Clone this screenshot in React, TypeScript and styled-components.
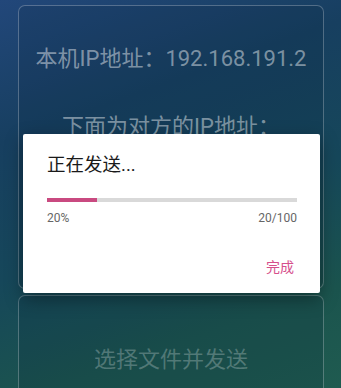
import React from "react";
import styled, { createGlobalStyle } from "styled-components";

const Global = createGlobalStyle`
  html, body { margin: 0; padding: 0; }
  body { font-family: Roboto, "Noto Sans CJK SC", sans-serif; }
`;

const Screen = styled.div`
  position: relative;
  width: 341px;
  height: 388px;
  overflow: hidden;
  box-sizing: border-box;
  padding: 5px 17px 0 18px;
  display: flex;
  flex-direction: column;
  gap: 6px;
  background: linear-gradient(160deg, #22477a 0%, #173f60 28%, #16475a 55%, #1b544e 80%, #1f5b50 100%);
`;

const Card = styled.div<{ $h: number; $pt: number }>`
  flex: 0 0 auto;
  height: ${(p) => p.$h}px;
  box-sizing: border-box;
  border: 1px solid rgba(255, 255, 255, 0.26);
  border-radius: 7px;
  background: rgba(10, 30, 50, 0.14);
  padding-top: ${(p) => p.$pt}px;
  display: flex;
  flex-direction: column;
  align-items: center;
`;

const Line = styled.div<{ $dim?: boolean; $mt?: number }>`
  font-size: 22px;
  line-height: 30px;
  white-space: nowrap;
  margin-top: ${(p) => p.$mt ?? 0}px;
  color: ${(p) => (p.$dim ? "rgba(255,255,255,0.25)" : "rgba(255,255,255,0.45)")};
`;

const Dialog = styled.div`
  position: absolute;
  left: 23px;
  top: 134px;
  width: 297px;
  height: 159px;
  box-sizing: border-box;
  background: #ffffff;
  border-radius: 2px;
  box-shadow: 0 6px 18px rgba(0, 0, 0, 0.35);
  padding: 19px 18px 0 24px;
  display: flex;
  flex-direction: column;
`;

const Title = styled.div`
  font-size: 18.5px;
  line-height: 24px;
  color: #1a1a1a;
`;

const Track = styled.div`
  margin-top: 21px;
  margin-right: 5px;
  height: 4px;
  background: #d9d9d9;
  display: flex;
`;

const Fill = styled.div`
  height: 100%;
  background: #c94a80;
`;

const Labels = styled.div`
  margin-top: 8px;
  margin-right: 5px;
  display: flex;
  justify-content: space-between;
  font-size: 12px;
  line-height: 16px;
  color: #666;
`;

const Actions = styled.div`
  margin-top: 27px;
  display: flex;
  justify-content: flex-end;
`;

const Button = styled.button`
  border: none;
  background: transparent;
  padding: 4px 8px;
  font-family: inherit;
  font-size: 14px;
  line-height: 20px;
  color: #d64f8c;
`;

export default function App() {
  const done = 20;
  const total = 100;
  const pct = (done / total) * 100;
  return (
    <>
      <Global />
      <Screen>
        <Card $h={284} $pt={38}>
          <Line>本机IP地址：192.168.191.2</Line>
          <Line $mt={38}>下面为对方的IP地址：</Line>
        </Card>
        <Card $h={120} $pt={49}>
          <Line $dim>选择文件并发送</Line>
        </Card>
        <Dialog>
          <Title>正在发送...</Title>
          <Track>
            <Fill style={{ width: `${pct}%` }} />
          </Track>
          <Labels>
            <span>{pct}%</span>
            <span>
              {done}/{total}
            </span>
          </Labels>
          <Actions>
            <Button>完成</Button>
          </Actions>
        </Dialog>
      </Screen>
    </>
  );
}
